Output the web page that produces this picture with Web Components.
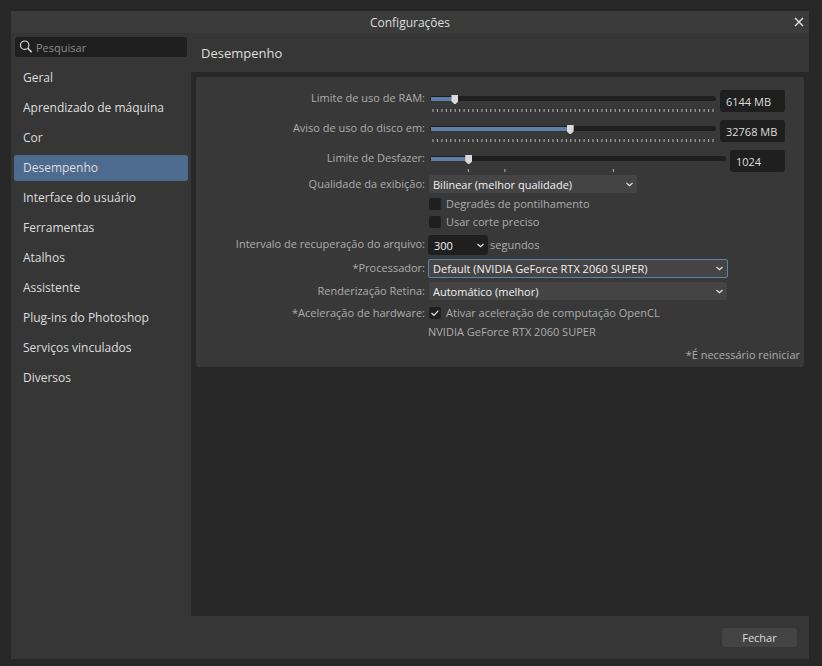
<!DOCTYPE html>
<html lang="pt-BR">
<head>
<meta charset="utf-8">
<title>Configurações</title>
<style>
  html, body { height: 100%; margin: 0; }
  body {
    background: #272727;
    color: #dedede;
    font: 12px/20px "Open Sans", "Noto Sans", sans-serif;
  }
</style>
</head>
<body>
<settings-dialog></settings-dialog>

<script>
const define = (name, html, setup) => {
  const template = document.createElement('template');
  template.innerHTML = `<style>*, *::before { box-sizing: border-box; }</style>${html}`;
  customElements.define(name, class extends HTMLElement {
    constructor() {
      super();
      this.attachShadow({ mode: 'open' }).append(template.content.cloneNode(true));
    }
    connectedCallback() {
      if (setup) setup(this, this.shadowRoot);
    }
  });
};

/* Search box of the sidebar */
define('search-field', `
  <style>
    :host { display: block; }
    label {
      display: flex; align-items: center; gap: 4px;
      height: 20px; padding: 0 5px;
      background: #1f1f1f; border-radius: 3px;
    }
    svg { flex: none; }
    input {
      flex: 1; min-width: 0; padding: 2px 0 0; border: 0; outline: 0;
      background: none; color: #dedede; font: inherit; font-size: 11px; height: 20px;
    }
    input::placeholder { color: #8c8c8c; opacity: 1; }
  </style>
  <label>
    <svg width="12" height="14" viewBox="0 0 12 14" fill="none" stroke="#e2e2e2" aria-hidden="true">
      <circle cx="4.7" cy="5.2" r="4.2" stroke-width="1.1"/>
      <path d="M7.8 8.3L11.6 12.2" stroke-width="1.4"/>
    </svg>
    <input type="search" placeholder="Pesquisar" aria-label="Pesquisar">
  </label>`);

/* One category of the sidebar */
define('nav-item', `
  <style>
    :host { display: block; }
    a {
      display: flex; align-items: center; height: 26px; padding: 0 9px;
      border-radius: 3px; color: #dedede; text-decoration: none;
    }
    :host([selected]) a { background: #4d6b8e; }
  </style>
  <a href="#"><slot></slot></a>`, (host, root) => {
    if (host.hasAttribute('selected')) root.querySelector('a').setAttribute('aria-current', 'page');
  });

/* Slider with tick marks and a value box */
define('slider-row', `
  <style>
    :host { display: flex; align-items: flex-start; gap: 4px; color: #adadad; font-size: 11px; }
    .name { flex: 0 0 229px; text-align: right; line-height: 17px; }
    .scale { flex: 1; min-width: 0; margin-left: 1px; }
    input[type=range] {
      appearance: none; display: block; width: 100%; height: 19px;
      margin: 0; background: none; outline: 0;
    }
    input[type=range]::-webkit-slider-runnable-track {
      height: 5px; border-radius: 3px;
      background: linear-gradient(#5b7fab, #5b7fab) 1px 1px / calc(3px + var(--part) * (100% - 7px)) 4px no-repeat #1f1f1f;
    }
    input[type=range]::-webkit-slider-thumb {
      appearance: none; width: 7px; height: 9px; margin-top: -1px;
      background: #d9d9d9; clip-path: polygon(0 0, 100% 0, 100% 70%, 60% 100%, 40% 100%, 0 70%);
    }
    .ticks { display: block; padding: 1px 3px 0; }
    .ticks svg { display: block; width: 100%; height: 3px; overflow: visible; }
    .value {
      flex: none; width: 65px; height: 22px; margin: 1px 19px 0 0; padding: 0 6px;
      background: #1f1f1f; border: 0; border-radius: 3px; outline: 0;
      color: #dedede; font: inherit;
    }
    :host([narrow]) .value { width: 55px; }
  </style>
  <label class="name" for="range"><slot></slot></label>
  <div class="scale">
    <input type="range" id="range" min="0" max="1000">
    <span class="ticks"><svg aria-hidden="true"></svg></span>
  </div>
  <input class="value" type="text">`, (host, root) => {
    const part = Number(host.getAttribute('part-filled'));
    const range = root.querySelector('#range');
    range.value = part * 1000;
    range.style.setProperty('--part', part);
    range.addEventListener('input', () => range.style.setProperty('--part', range.value / 1000));
    const value = root.querySelector('.value');
    value.value = host.getAttribute('value');
    value.setAttribute('aria-label', host.textContent.trim());
    const marks = host.hasAttribute('ticks')
      ? host.getAttribute('ticks').split(' ').map(Number)
      : Array.from({ length: 64 }, (_, i) => i / 63 * 100);
    root.querySelector('svg').innerHTML = marks.map(x =>
      `<line x1="${x}%" x2="${x}%" y1="0" y2="3" stroke="#b4b4b4" stroke-width="1"/>`).join('');
  });

/* Label on the left, any controls on the right */
define('form-row', `
  <style>
    :host { display: flex; align-items: flex-start; gap: 3px; color: #adadad; font-size: 11px; }
    .name { flex: 0 0 229px; text-align: right; line-height: 18px; }
    .controls { flex: 1; min-width: 0; display: flex; flex-wrap: wrap; align-items: center; }
    :host([stacked]) .controls { flex-direction: column; align-items: flex-start; }
  </style>
  <span class="name"><slot name="label"></slot></span>
  <div class="controls"><slot></slot></div>`);

/* Drop-down list */
define('combo-box', `
  <style>
    :host { display: block; max-width: 100%; width: 300px; padding: 0 1px; }
    :host([size=medium]) { width: 210px; }
    :host([size=small]) { width: 60px; padding: 0; }
    :host([focused]) { padding: 0; }
    div { display: grid; align-items: center; }
    select, svg { grid-area: 1 / 1; }
    select {
      appearance: none; width: 100%; height: 18px; margin: 0; padding: 0 20px 0 4px;
      background: #444; border: 0; border-radius: 2px; outline: 0;
      color: #f2f2f2; font: inherit; font-size: 11px; line-height: 17px;
    }
    svg { justify-self: end; margin-right: 3px; pointer-events: none; }
    :host([focused]) select { height: 19px; border: 1px solid #5b82b3; }
    :host([focused]) svg { margin-right: 4px; }
    :host([size=small]) select { height: 20px; padding-left: 6px; background: #1f1f1f; border-radius: 3px; }
  </style>
  <div>
    <select><option></option></select>
    <svg width="9" height="7" viewBox="0 0 9 7" fill="none" stroke="#e6e6e6" stroke-width="1.2" aria-hidden="true">
      <path d="M1.5 2L4.5 4.6L7.5 2"/>
    </svg>
  </div>`, (host, root) => {
    root.querySelector('option').textContent = host.getAttribute('value');
    root.querySelector('select').setAttribute('aria-label', host.getAttribute('name'));
  });

/* Tick box with its text */
define('check-box', `
  <style>
    :host { display: block; padding-left: 1px; }
    label { display: flex; align-items: center; gap: 5px; height: 18px; }
    .box { display: grid; flex: none; }
    input, svg { grid-area: 1 / 1; }
    input {
      appearance: none; width: 12px; height: 12px; margin: 0;
      background: #1f1f1f; border-radius: 2px;
    }
    svg { pointer-events: none; visibility: hidden; }
    input:checked + svg { visibility: visible; }
  </style>
  <label>
    <span class="box">
      <input type="checkbox">
      <svg width="12" height="12" viewBox="0 0 12 12" fill="none" stroke="#e2e2e2" stroke-width="1.2" aria-hidden="true">
        <path d="M2.5 6L5 8.3L9.4 3.6"/>
      </svg>
    </span>
    <span><slot></slot></span>
  </label>`, (host, root) => {
    root.querySelector('input').checked = host.hasAttribute('checked');
  });

/* Page of performance settings */
define('performance-panel', `
  <style>
    :host { display: block; padding: 12px 0 3px; background: #383838; border-radius: 3px; color: #adadad; font-size: 11px; }
    .sliders { display: flex; flex-direction: column; gap: 7px; margin-bottom: 3px; }
    .rows { display: flex; flex-direction: column; gap: 4px; }
    .display { display: flex; flex-direction: column; gap: 2px; }
    .unit { padding-left: 2px; line-height: 20px; }
    .gpu { line-height: 20px; }
    .note { margin: 0; padding-right: 4px; text-align: right; line-height: 18px; }
  </style>
  <div class="sliders">
    <slider-row part-filled="0.077" value="6144 MB">Limite de uso de RAM:</slider-row>
    <slider-row part-filled="0.49" value="32768 MB">Aviso de uso do disco em:</slider-row>
    <slider-row part-filled="0.122" value="1024" narrow ticks="12.2 24.8 62.2">Limite de Desfazer:</slider-row>
  </div>
  <div class="rows">
    <div class="display">
      <form-row><span slot="label">Qualidade da exibição:</span>
        <combo-box size="medium" name="Qualidade da exibição" value="Bilinear (melhor qualidade)"></combo-box></form-row>
      <form-row stacked>
        <check-box>Degradês de pontilhamento</check-box>
        <check-box>Usar corte preciso</check-box></form-row>
    </div>
    <form-row><span slot="label">Intervalo de recuperação do arquivo:</span>
      <combo-box size="small" name="Intervalo de recuperação do arquivo" value="300"></combo-box>
      <span class="unit">segundos</span></form-row>
    <form-row><span slot="label">*Processador:</span>
      <combo-box focused name="Processador" value="Default (NVIDIA GeForce RTX 2060 SUPER)"></combo-box></form-row>
    <form-row><span slot="label">Renderização Retina:</span>
      <combo-box name="Renderização Retina" value="Automático (melhor)"></combo-box></form-row>
    <form-row stacked><span slot="label">*Aceleração de hardware:</span>
      <check-box checked>Ativar aceleração de computação OpenCL</check-box>
      <span class="gpu">NVIDIA GeForce RTX 2060 SUPER</span></form-row>
    <p class="note">*É necessário reiniciar</p>
  </div>`);

/* The whole window */
define('settings-dialog', `
  <style>
    :host { min-height: 100vh; padding: 11px 13px 7px 11px; display: flex; box-sizing: border-box; }
    .window { flex: 1; min-width: 0; display: flex; flex-direction: column; background: #363636; }
    .titlebar {
      display: grid; grid-template-columns: 1fr auto 1fr; align-items: center;
      height: 22px; background: #3b3b3b;
    }
    .titlebar h1 { grid-column: 2; margin: 0; padding-top: 2px; font: inherit; }
    button { border: 0; padding: 0; color: #dedede; font: inherit; }
    .close { justify-self: end; display: grid; place-items: center; width: 20px; height: 22px; background: none; }
    .main { flex: 1; display: flex; }
    aside { flex: 0 0 180px; padding: 4px 3px; }
    search-field { margin: 0 1px 8px; }
    nav { display: flex; flex-direction: column; gap: 4px; }
    .page { flex: 1; min-width: 0; display: flex; flex-direction: column; }
    h2 { margin: 0; height: 39px; padding-left: 10px; font-size: 13px; font-weight: 400; line-height: 40px; }
    .body { flex: 1; padding: 5px; background: #282828; }
    footer { display: flex; justify-content: flex-end; align-items: center; height: 43px; padding-right: 12px; }
    .done { width: 75px; height: 19px; background: #444; border-radius: 3px; font-size: 11px; line-height: 19px; }
  </style>
  <div class="window" role="dialog" aria-labelledby="title">
    <header class="titlebar">
      <h1 id="title">Configurações</h1>
      <button class="close" aria-label="Fechar janela">
        <svg width="10" height="10" viewBox="0 0 10 10" stroke="#e2e2e2" stroke-width="1.4" aria-hidden="true">
          <path d="M1 1L9 9M9 1L1 9"/>
        </svg>
      </button>
    </header>
    <div class="main">
      <aside>
        <search-field></search-field>
        <nav>
          <nav-item>Geral</nav-item>
          <nav-item>Aprendizado de máquina</nav-item>
          <nav-item>Cor</nav-item>
          <nav-item selected>Desempenho</nav-item>
          <nav-item>Interface do usuário</nav-item>
          <nav-item>Ferramentas</nav-item>
          <nav-item>Atalhos</nav-item>
          <nav-item>Assistente</nav-item>
          <nav-item>Plug-ins do Photoshop</nav-item>
          <nav-item>Serviços vinculados</nav-item>
          <nav-item>Diversos</nav-item>
        </nav>
      </aside>
      <section class="page">
        <h2>Desempenho</h2>
        <div class="body"><performance-panel></performance-panel></div>
      </section>
    </div>
    <footer><button class="done">Fechar</button></footer>
  </div>`);
</script>
</body>
</html>
